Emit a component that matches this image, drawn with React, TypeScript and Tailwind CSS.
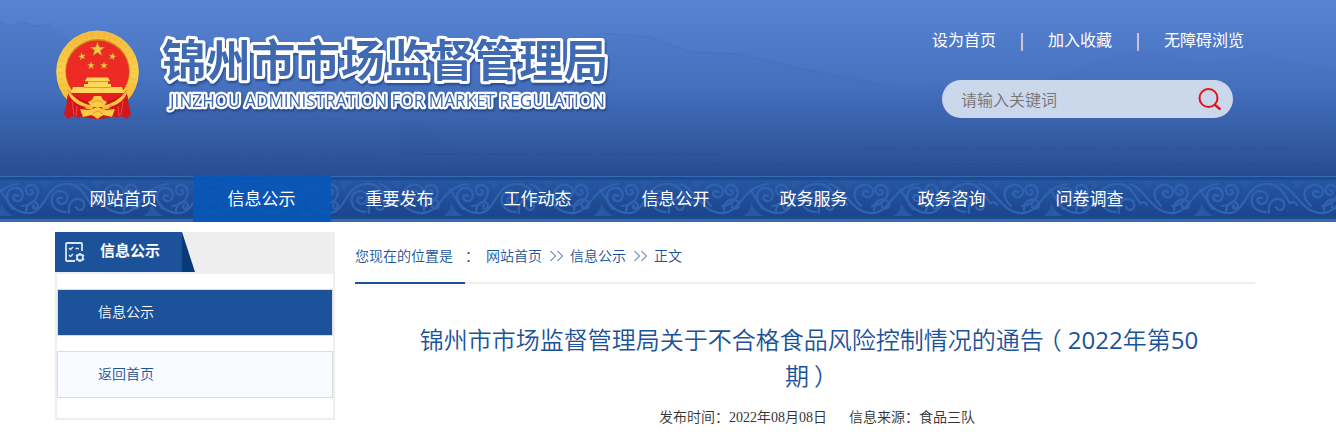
import React from "react";

const navItems = [
  "网站首页",
  "信息公示",
  "重要发布",
  "工作动态",
  "信息公开",
  "政务服务",
  "政务咨询",
  "问卷调查",
];

const topLinks = ["设为首页", "加入收藏", "无障碍浏览"];

const star = "M0 -10L2.4 -3.1H9.5L3.8 1.2L5.9 8.1L0 3.9L-5.9 8.1L-3.8 1.2L-9.5 -3.1H-2.4Z";

const Emblem = () => (
  <svg className="w-[84px] h-[90px] ml-px shrink-0" viewBox="0 0 84 90">
    <defs>
      <linearGradient id="gold" x1="0" y1="0" x2="0" y2="1">
        <stop offset="0" stopColor="#f3bb3c" />
        <stop offset="0.5" stopColor="#fbd04a" />
        <stop offset="1" stopColor="#f2b52c" />
      </linearGradient>
    </defs>
    <ellipse cx="41.5" cy="42" rx="41.3" ry="41.5" fill="url(#gold)" />
    <ellipse cx="41.5" cy="42" rx="37" ry="37" fill="none" stroke="#e0a02c" strokeWidth="5" strokeDasharray="2 4" opacity="0.2" />
    <ellipse cx="41.5" cy="41" rx="32.3" ry="32" fill="#cf8a1d" />
    <ellipse cx="41.5" cy="42" rx="31.5" ry="31.5" fill="#ee2a24" />
    <g fill="#f7c744" stroke="#a8671c" strokeWidth="0.8">
      <path d={star} transform="translate(41.5 19.5) scale(.8)" />
      <path d={star} transform="translate(26 26.5) rotate(-12) scale(.42)" />
      <path d={star} transform="translate(56.5 26.5) rotate(12) scale(.42)" />
      <path d={star} transform="translate(35 35.5) scale(.42)" />
      <path d={star} transform="translate(48 35.5) scale(.42)" />
    </g>
    <path d="M31 47.5H52L54 51H29ZM32 51H52V54H32ZM28 54H55V57H28ZM17 57H66L68 63H15Z" fill="#ffd85a" />
    <path d="M29 51.5H54M28 57.5H55" stroke="#e07a25" strokeWidth="0.7" />
    <path d="M15 63H68Q58 74 41.5 74Q24 74 15 63Z" fill="#e31f1f" />
    <path d="M12 60L10 80Q20 88 41.5 89Q63 88 73 80L71 60Q60 72 41.5 72Q23 72 12 60Z" fill="#cf1419" />
    <path d="M12 60Q22 74 38 76L36 80Q18 77 10 64ZM71 60Q61 74 45 76L47 80Q65 77 73 64Z" fill="url(#gold)" />
    <path d="M12 63L14 67Q20 75 30 77L24 81V88L17 86L12 89L8 84L11 73Z" fill="#d3161b" />
    <path d="M71 63L69 67Q63 75 53 77L59 81V88L66 86L71 89L75 84L72 73Z" fill="#d3161b" />
    <path d="M24 79L33 80L41.5 78L50 80L59 79L56 87L47 85L41.5 89L36 85L27 87Z" fill="url(#gold)" />
    <path d="M16 71L18 85M21 76L20 86M67 71L65 85M62 76L63 86" stroke="#f04736" strokeWidth="1.1" fill="none" />
    <path d="M32 72L36 70L38 66H45L47 70L51 72L48 76L41.5 78L35 76ZM35 82L38 78H45L48 82L46 86H37Z" fill="#fcca45" />
    <path d="M36 73Q41.5 68 47 73M37 84Q41.5 78 46 84" stroke="#dc8d1c" strokeWidth="0.8" fill="none" />
  </svg>
);

const SiteTitle = () => (
  <svg
    className="w-[456px] h-[92px] ml-[18px] overflow-visible drop-shadow-[1px_2px_1px_rgba(20,50,110,0.6)]"
    viewBox="0 0 456 92"
    fill="#3f69b1"
    stroke="#fff"
    strokeLinejoin="round"
    paintOrder="stroke"
  >
    <text
      x="4"
      y="47"
      textLength="446"
      lengthAdjust="spacing"
      strokeWidth="6"
      className="text-[44px] font-bold font-['Noto_Sans_CJK_SC',sans-serif]"
    >
      锦州市市场监督管理局
    </text>
    <text
      x="12"
      y="77"
      textLength="435"
      lengthAdjust="spacingAndGlyphs"
      strokeWidth="4.5"
      className="text-[17.5px] font-medium font-['Open_Sans',sans-serif]"
    >
      JINZHOU ADMINISTRATION FOR MARKET REGULATION
    </text>
  </svg>
);

// Faint hills behind the header content
const Hills = () => (
  <svg className="absolute inset-0 w-full h-full" viewBox="0 0 1336 176" preserveAspectRatio="none" fill="none">
    <path
      d="M0 22L10 26L22 22L36 26L50 24L90 58L170 92L210 112L290 106L330 118L420 126L460 152L520 164L1336 170V176H0Z"
      fill="#2b5096"
      opacity="0.07"
    />
    <path
      d="M400 90L450 70L510 54L560 40L600 33L650 37L690 52L740 54L790 66L840 76L900 88L960 84L1020 92L1100 60L1140 48L1200 62L1260 54L1336 70V176H400Z"
      fill="#2b5096"
      opacity="0.04"
    />
    <path d="M0 22L10 26L22 22L36 26L50 24M600 33L650 37L690 52L740 54L790 66L840 76L900 88" stroke="#3d68b4" opacity="0.3" />
    <path d="M0 158H390M420 154H720M700 164H1336M0 168H1336M860 148H1290" stroke="#1f437f" strokeDasharray="40 7 16 4" opacity="0.2" />
  </svg>
);

const NavPattern = () => (
  <svg className="absolute inset-x-0 top-[4px] w-full h-[35px]">
    <defs>
      <pattern id="scroll" x="90" width="150" height="36" patternUnits="userSpaceOnUse">
        <g fill="none" stroke="#2f63af" strokeWidth="2.2" strokeLinecap="round">
          <path d="M-10 3C5 7 10 30 30 32S52 5 78 3" />
          <path d="M60 9C68 18 70 31 88 32S104 4 126 3S145 30 165 32" />
          <path d="M140 3C155 7 160 30 180 32" />
          <path d="M21 25C8 13 17 2 27 4C37 7 33 18 26 16C20 13 24 8 28 11" />
          <path d="M32 25C48 23 52 8 43 4C34 3 33 13 40 14C44 13 43 9 40 9" />
          <path d="M34 29C34 18 46 15 49 23C49 29 41 29 42 24" />
          <path d="M73 28C62 16 68 5 78 7C86 11 83 22 76 20C71 17 74 12 78 15" />
          <path d="M82 25C97 24 103 8 93 4C84 3 84 13 90 14C94 13 93 9 91 9" />
          <path d="M86 30C87 20 97 18 98 25C96 30 91 27 94 24" />
          <path d="M126 31C108 30 108 12 119 10C130 10 130 23 121 23C115 21 117 15 122 17" />
          <path d="M129 32C127 20 136 15 143 20C147 28 139 32 136 26" />
          <path d="M-2 32C-4 22 4 18 7 24" />
        </g>
        <path
          d="M0 0H18Q9 3 7 9Q4 2 0 0ZM52 36Q61 31 61 22Q66 33 76 36ZM98 0H114Q107 4 104 9Q102 3 98 0ZM130 36Q138 34 141 36Z"
          fill="#2859a3"
        />
      </pattern>
    </defs>
    <rect width="100%" height="100%" fill="url(#scroll)" />
  </svg>
);

const Header = () => (
  <header className="relative h-[176px] bg-linear-to-b from-[#5883d2] via-[#4571bf] to-[#294d91] overflow-hidden">
    <Hills />
    <div className="relative flex justify-between w-[1200px] ml-[55px]">
      <div className="flex items-start pt-[30px]">
        <Emblem />
        <SiteTitle />
      </div>
      <div className="pt-[27px] w-[323px]">
        <div className="flex text-[16px] leading-6 text-white whitespace-nowrap">
          {topLinks.map((link, i) => (
            <React.Fragment key={link}>
              {i > 0 && <span className="w-[52px] text-center">|</span>}
              <a href="#">{link}</a>
            </React.Fragment>
          ))}
        </div>
        <div className="mt-[29px] ml-[10px] flex items-center justify-between w-[291px] h-[38px] rounded-full bg-[#cbd7ea] pl-[19px] pr-[11px]">
          <span className="text-[16px] leading-6 text-[#757575] font-[350]">请输入关键词</span>
          <svg className="w-6 h-6" viewBox="0 0 24 24" fill="none" stroke="#e0141b" strokeWidth="2">
            <circle cx="10.5" cy="11" r="9" />
            <path d="M16.5 17.5L22.5 22.5" strokeWidth="2.3" />
          </svg>
        </div>
      </div>
    </div>
  </header>
);

const Navbar = () => (
  <nav className="relative h-[46px] bg-linear-to-b from-[#2858a4] to-[#1a4288] border-t border-[#376bb4]">
    <div className="absolute inset-x-0 top-0 h-[3px] bg-[#1d4b8e]" />
    <NavPattern />
    <div className="absolute inset-x-0 bottom-[3px] h-[3px] bg-[#1d4b8e]" />
    <div className="absolute inset-x-0 bottom-0 h-[3px] bg-[#346bb7]" />
    <ul className="relative flex ml-[55px] -mt-px">
      {navItems.map((item, i) => (
        <li
          key={item}
          className={`w-[138px] h-[46px] leading-[44px] pr-px text-center text-[17px] text-white ${
            i === 1 ? "bg-[#0856b8]/90" : ""
          }`}
        >
          {item}
        </li>
      ))}
    </ul>
  </nav>
);

const Sidebar = () => (
  <aside className="w-[280px] h-[188px] bg-[#eee] pb-[2px]">
    <div className="flex h-[40px]">
      <div className="flex items-center w-[127px] bg-[#1b5299] pl-[10px]">
        <svg className="w-5 h-5" viewBox="0 0 20 20" fill="none" stroke="#d9e5f5" strokeWidth="1.8">
          <path d="M10 19H2Q1 19 1 18V2Q1 1 2 1H16Q17 1 17 2V9" />
          <path d="M4 6L5.5 7.5L8 5M4 13L5.5 14.5L8 12M10.5 6.5H14" strokeWidth="1.5" />
          <circle cx="15" cy="15.5" r="3" />
          <path d="M15 11V12.5M15 18.5V20M11 13L12.2 14M19 13L17.8 14M11 18L12.2 17M19 18L17.8 17" />
        </svg>
        <h2 className="ml-[15px] mb-[3px] text-[15px] font-bold text-white">信息公示</h2>
      </div>
      <svg className="w-[13px] h-[40px]" viewBox="0 0 13 40">
        <path d="M0 0L13 40H0Z" fill="#063a78" />
      </svg>
    </div>
    <ul className="mx-[2px] mt-[2px] h-[144px] bg-white pt-[15px] text-[14px] font-[350]">
      <li className="h-[47px] leading-[43px] pl-[40px] border border-[#ddd] bg-[#1b5299] text-white">信息公示</li>
      <li className="mt-[15px] h-[47px] leading-[43px] pl-[40px] border border-[#ddd] bg-[#f8fbff] text-[#1b5299]">
        返回首页
      </li>
    </ul>
  </aside>
);

const Chevrons = () => (
  <svg className="w-7 h-[48px]" viewBox="0 0 28 48" fill="none" stroke="#1b5299">
    <path d="M8.5 19L13.5 24L8.5 29M15.5 19L20.5 24L15.5 29" />
  </svg>
);

const Article = () => (
  <main className="w-[900px] ml-5">
    <div className="flex h-[52px] border-b-2 border-[#eee] text-[14px] leading-[46px] text-[#1b5299] font-[350] whitespace-pre">
      <div className="w-[110px] h-[52px] border-b-2 border-[#1b5299]">您现在的位置是</div>
      <span className="w-[21px]">：</span>
      <span>网站首页</span>
      <Chevrons />
      <span>信息公示</span>
      <Chevrons />
      <span>正文</span>
    </div>
    <h1 className="mt-[38px] pl-[64px] pr-[56px] text-center text-[24px] leading-9 text-[#1b5299] font-[350] font-['Open_Sans','Noto_Sans_CJK_SC',sans-serif]">
      锦州市市场监督管理局关于不合格食品风险控制情况的通告
      <span className="-ml-[6px] mr-[6px]">（</span>
      <span className="font-normal">2022</span>年第<span className="font-normal">50</span>期
      <span className="ml-[5px] -mr-[5px]">）</span>
    </h1>
    <div className="mt-[12px] pl-[304px] flex text-[14px] leading-[24px] text-[#333] font-[350] font-['Liberation_Serif','Noto_Sans_CJK_SC',sans-serif]">
      <span className="w-[190px]">发布时间：2022年08月08日</span>
      <span>信息来源：食品三队</span>
    </div>
  </main>
);

const App = () => {
  return (
    <div className="min-h-[444px] bg-white font-['Noto_Sans_CJK_SC',sans-serif]">
      <Header />
      <Navbar />
      <div className="flex items-start pt-[10px] pl-[55px]">
        <Sidebar />
        <Article />
      </div>
    </div>
  );
};

export default App;
